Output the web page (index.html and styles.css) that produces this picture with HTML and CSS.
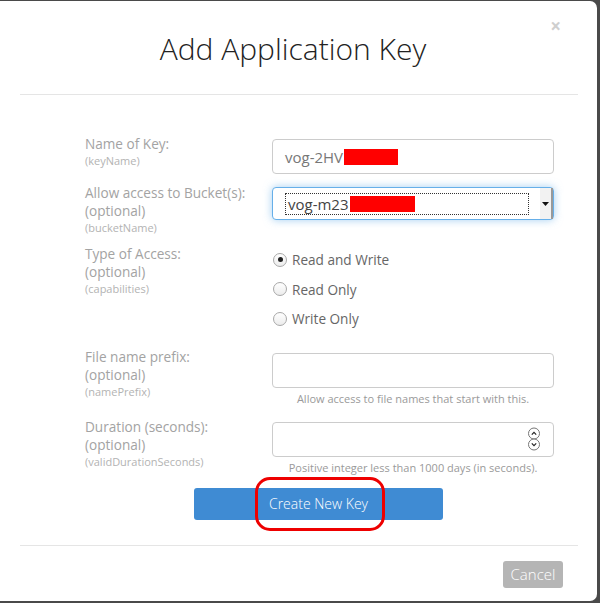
FILE: index.html
```html
<!DOCTYPE html>
<html>
<head>
<meta charset="utf-8">
<link rel="stylesheet" href="styles.css">
</head>
<body>
<div class="modal">
  <div class="modal-header">
    <span class="close">×</span>
    <h1 class="title">Add Application Key</h1>
  </div>
  <div class="modal-body">
    <div class="row">
      <div class="label">Name of Key:<span class="sub">(keyName)</span></div>
      <div class="control c-input">
        <div class="input"><span class="val">vog-2HV</span><span class="redact r1"></span></div>
      </div>
    </div>
    <div class="row">
      <div class="label">Allow access to Bucket(s):<br>(optional)<span class="sub">(bucketName)</span></div>
      <div class="control c-select">
        <div class="select">
          <div class="focusbox"><span class="val dark">vog-m23</span><span class="redact r2"></span></div>
          <div class="arrow"><svg width="7" height="4" viewBox="0 0 7 4"><path d="M0 0H7L3.5 4Z" fill="#111"/></svg></div>
        </div>
      </div>
    </div>
    <div class="row">
      <div class="label">Type of Access:<br>(optional)<span class="sub">(capabilities)</span></div>
      <div class="control c-radio">
        <div class="radio"><span class="dot on"></span>Read and Write</div>
        <div class="radio"><span class="dot"></span>Read Only</div>
        <div class="radio"><span class="dot"></span>Write Only</div>
      </div>
    </div>
    <div class="row">
      <div class="label">File name prefix:<br>(optional)<span class="sub">(namePrefix)</span></div>
      <div class="control c-input2">
        <div class="input"></div>
        <div class="help">Allow access to file names that start with this.</div>
      </div>
    </div>
    <div class="row">
      <div class="label">Duration (seconds):<br>(optional)<span class="sub">(validDurationSeconds)</span></div>
      <div class="control c-input2">
        <div class="input spin-input">
          <svg class="spin" width="14" height="24" viewBox="0 0 14 24">
            <circle cx="7" cy="6.5" r="5.5" fill="#fff" stroke="#777"/>
            <circle cx="7" cy="17.5" r="5.5" fill="#fff" stroke="#777"/>
            <path d="M4.8 7.6L7 5.4L9.2 7.6" fill="none" stroke="#222" stroke-width="1.2"/>
            <path d="M4.8 16.4L7 18.6L9.2 16.4" fill="none" stroke="#222" stroke-width="1.2"/>
          </svg>
        </div>
        <div class="help">Positive integer less than 1000 days (in seconds).</div>
      </div>
    </div>
    <div class="actions">
      <div class="btn-primary">Create New Key<span class="ring"></span></div>
    </div>
  </div>
  <div class="modal-footer">
    <div class="btn-cancel">Cancel</div>
  </div>
</div>
</body>
</html>
```
FILE: styles.css
```css
html, body {
  margin: 0;
  padding: 0;
}
body {
  background: #4a4a4a;
  width: 600px;
  height: 603px;
  overflow: hidden;
  font-family: "Open Sans", "Liberation Sans", sans-serif;
}
.modal {
  width: 597px;
  height: 600px;
  margin-top: 1px;
  background: #fff;
  border-radius: 0 7px 7px 0;
  box-sizing: border-box;
  display: flex;
  flex-direction: column;
}
.modal-header {
  position: relative;
  height: 93px;
  margin: 0 19px 0 20px;
  border-bottom: 1px solid #e5e5e5;
}
.close {
  position: absolute;
  right: 17px;
  top: 13px;
  font-size: 19px;
  font-weight: 700;
  color: #cfcfcf;
  line-height: 24px;
}
.title {
  margin: 0;
  padding-top: 28px;
  padding-right: 12px;
  text-align: center;
  font-size: 30px;
  font-weight: 300;
  line-height: 40px;
  color: #222;
}
.modal-body {
  padding: 40px 0 0 65px;
  height: 451px;
  box-sizing: border-box;
  margin: 0 19px 0 20px;
  border-bottom: 1px solid #e5e5e5;
}
.row {
  display: grid;
  grid-template-columns: 187px 282px;
  align-items: start;
}
.label {
  font-size: 13.6px;
  line-height: 18px;
  color: #a3a3a3;
}
.sub {
  display: block;
  font-size: 11px;
  line-height: 15px;
  color: #b3b3b3;
}
.c-input { margin-top: 4px; margin-bottom: 10px; }
.c-select { margin-top: 3px; }
.c-radio { margin-top: 0; }
.c-input2 { margin-top: 5px; }
.row:nth-child(2) { margin-bottom: 10px; }
.row:nth-child(3) { margin-bottom: 14px; }
.row:nth-child(4) { margin-bottom: 12px; }
.row:nth-child(5) .c-input2 { margin-top: 4px; }
.input {
  height: 35px;
  box-sizing: border-box;
  border: 1px solid #cccccc;
  border-radius: 4px;
  padding: 0 12px;
  display: flex;
  align-items: center;
  background: #fff;
}
.val {
  font-size: 15px;
  color: #777;
}
.val.dark { color: #444; }
.redact {
  display: inline-block;
  background: #ff0000;
  height: 16px;
}
.r1 { width: 54px; margin-left: 1px; }
.r2 { width: 65px; margin-left: 1px; }
.select {
  height: 33px;
  box-sizing: border-box;
  border: 1px solid #66afe9;
  border-radius: 4px;
  box-shadow: 0 0 8px rgba(102, 175, 233, 0.6);
  display: flex;
  align-items: center;
  padding-left: 12px;
  background: #fff;
}
.focusbox {
  width: 244px;
  height: 22px;
  box-sizing: border-box;
  border: 1px dotted #333;
  display: flex;
  align-items: center;
  padding-left: 2px;
}
.arrow {
  margin-left: auto;
  width: 13px;
  height: 31px;
  background: #f2f2f2;
  border-right: 2px solid #999;
  display: flex;
  align-items: center;
  justify-content: center;
  box-sizing: border-box;
}
.radio {
  height: 29.5px;
  display: flex;
  align-items: center;
  font-size: 13.6px;
  color: #666;
}
.dot {
  width: 14px;
  height: 14px;
  box-sizing: border-box;
  border-radius: 50%;
  border: 1px solid #a8a8a8;
  background: linear-gradient(#ffffff, #ececec);
  margin: 0 5px 0 1px;
  position: relative;
}
.dot.on::after {
  content: "";
  position: absolute;
  left: 3.5px;
  top: 3.5px;
  width: 5px;
  height: 5px;
  border-radius: 50%;
  background: #222;
}
.help {
  text-align: center;
  font-size: 11px;
  line-height: 14px;
  color: #9a9a9a;
  margin-top: 4px;
}
.spin-input {
  justify-content: flex-end;
  padding-right: 12px;
  height: 35px;
}
.actions {
  padding-left: 109px;
  margin-top: 13px;
}
.btn-primary {
  position: relative;
  width: 249px;
  height: 32px;
  background: #3f8bd3;
  border-radius: 3px;
  color: #fff;
  font-size: 14px;
  font-weight: 300;
  line-height: 32px;
  text-align: center;
}
.ring {
  position: absolute;
  left: 61px;
  top: -11px;
  width: 130px;
  height: 54px;
  box-sizing: border-box;
  border: 3px solid #ee0000;
  border-radius: 15px;
}
.modal-footer {
  display: flex;
  justify-content: flex-end;
  padding: 15px 34px 0 0;
}
.btn-cancel {
  width: 60px;
  height: 27px;
  background: #b5b5b5;
  border-radius: 3px;
  color: #fff;
  font-size: 15px;
  font-weight: 300;
  line-height: 27px;
  text-align: center;
}
```
